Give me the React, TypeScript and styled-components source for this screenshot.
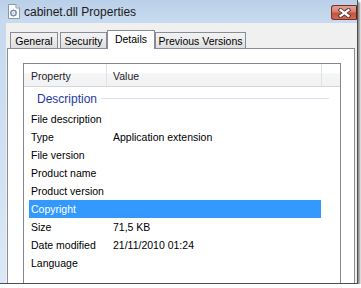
import React from 'react';
import styled, { createGlobalStyle } from 'styled-components';

const GlobalStyle = createGlobalStyle`
  html, body {
    margin: 0;
    padding: 0;
    background: #ffffff;
  }
  body {
    font-family: 'Liberation Sans', Arial, sans-serif;
  }
`;

const Window = styled.div`
  width: 357px;
  height: 283px;
  display: flex;
  flex-direction: column;
  background: linear-gradient(to bottom, #c4d8ee, #dbe8f6);
  border-right: 1px solid #4e4e4e;
  border-bottom: 1px solid #4e4e4e;
  box-shadow: 2px 2px 2px rgba(0, 0, 0, 0.45);
  overflow: hidden;
`;

const TitleBar = styled.div`
  height: 23px;
  flex-shrink: 0;
  display: flex;
  align-items: center;
  padding-left: 7px;
  background: linear-gradient(to bottom, #bad0e9, #c9dbef);
`;

const TitleText = styled.span`
  margin-left: 3px;
  font-size: 12px;
  color: #1b1b1b;
`;

const CloseButton = styled.div`
  margin-left: auto;
  align-self: flex-start;
  margin-top: 5px;
  width: 26px;
  height: 15px;
  box-sizing: border-box;
  border: 1px solid #7b2f25;
  border-right-color: #5a241d;
  border-radius: 3px 0 0 3px;
  background: linear-gradient(to bottom, #e3a394 0%, #d6816f 45%, #c4533f 55%, #cf6a55 100%);
  display: flex;
  align-items: center;
  justify-content: center;
`;

const Body = styled.div`
  flex: 1;
  display: flex;
  flex-direction: column;
  margin-left: 6px;
  padding-top: 7px;
  background: #f0f0f0;
  min-height: 0;
`;

const TabStrip = styled.div`
  height: 18px;
  flex-shrink: 0;
  display: flex;
  align-items: flex-end;
  padding-left: 4px;
  position: relative;
  z-index: 1;
`;

const Tab = styled.div<{ $width: number; $gap: number; $active?: boolean }>`
  width: ${(p) => p.$width}px;
  margin-left: ${(p) => p.$gap}px;
  height: ${(p) => (p.$active ? 19 : 16)}px;
  margin-bottom: ${(p) => (p.$active ? -1 : 0)}px;
  box-sizing: border-box;
  border: 1px solid #898c95;
  border-bottom: none;
  background: ${(p) =>
    p.$active ? '#ffffff' : 'linear-gradient(to bottom, #f2f2f2 0%, #ebebeb 50%, #dddddd 100%)'};
  font-size: 10.5px;
  color: #000;
  text-align: center;
  line-height: ${(p) => (p.$active ? 16 : 17)}px;
  white-space: nowrap;
`;

const Panel = styled.div`
  flex: 1;
  display: flex;
  flex-direction: column;
  margin-left: 1px;
  margin-right: 2px;
  padding: 14px 13px 0 15px;
  border: 1px solid #898c95;
  border-bottom: none;
  background: #ffffff;
  min-height: 0;
`;

const ListBox = styled.div`
  flex: 1;
  display: flex;
  flex-direction: column;
  border: 1px solid #828790;
  border-bottom: none;
  background: #ffffff;
`;

const Header = styled.div`
  height: 22px;
  flex-shrink: 0;
  display: flex;
  border-bottom: 1px solid #d5d5d5;
  background: linear-gradient(to bottom, #ffffff 0%, #ffffff 40%, #f4f5f6 45%, #f1f2f3 100%);
`;

const HeaderCell = styled.div<{ $width: number; $pad: number }>`
  width: ${(p) => p.$width}px;
  box-sizing: border-box;
  padding-left: ${(p) => p.$pad}px;
  padding-top: 2px;
  border-right: 1px solid #e2e3e5;
  font-size: 10.5px;
  color: #1e1e1e;
  display: flex;
  align-items: center;
`;

const GroupRow = styled.div`
  height: 23px;
  flex-shrink: 0;
  display: flex;
  align-items: center;
  padding-left: 13px;
  padding-right: 11px;
`;

const GroupTitle = styled.span`
  font-size: 12px;
  color: #1e3aa4;
`;

const GroupLine = styled.div`
  flex: 1;
  height: 1px;
  margin-left: 4px;
  margin-top: -1px;
  background: #d8e1ee;
`;

const Row = styled.div<{ $selected?: boolean }>`
  height: 18px;
  flex-shrink: 0;
  margin: 0 19px 0 5px;
  padding-left: 2px;
  display: grid;
  grid-template-columns: 82px 1fr;
  align-items: center;
  font-size: 10.5px;
  color: ${(p) => (p.$selected ? '#ffffff' : '#000000')};
  background: ${(p) => (p.$selected ? '#3399ff' : 'transparent')};
  white-space: nowrap;
`;

const FileIcon = () => (
  <svg width="14" height="15" viewBox="0 0 14 15">
    <path d="M1.5 0.5h7.5l3.5 3.5v10.5h-11z" fill="#fbfcfd" stroke="#8d9aaa" />
    <path d="M9 0.5v3.5h3.5" fill="#e4eaf2" stroke="#8d9aaa" />
    <circle cx="6.5" cy="9" r="2.6" fill="none" stroke="#7d8fa6" strokeWidth="1.4" />
    <path d="M6.5 5.4v1.2M6.5 11.4v1.2M2.9 9h1.2M8.9 9h1.2M4 6.5l.8.8M8.2 10.7l.8.8M9 6.5l-.8.8M4.8 10.7l-.8.8" stroke="#7d8fa6" strokeWidth="1.2" />
    <circle cx="6.5" cy="9" r="0.9" fill="#b7c4d4" />
  </svg>
);

const CloseGlyph = () => (
  <svg width="13" height="10" viewBox="0 0 13 10">
    <path d="M2.5 2l8 6M10.5 2l-8 6" stroke="#4b2a26" strokeWidth="3.8" strokeLinecap="square" />
    <path d="M2.5 2l8 6M10.5 2l-8 6" stroke="#ffffff" strokeWidth="2.2" strokeLinecap="square" />
  </svg>
);

const tabs = [
  { label: 'General', width: 48, gap: 0 },
  { label: 'Security', width: 47, gap: 2 },
  { label: 'Details', width: 48, gap: 0, active: true },
  { label: 'Previous Versions', width: 91, gap: 0 },
];

const rows: { name: string; value?: string; selected?: boolean }[] = [
  { name: 'File description' },
  { name: 'Type', value: 'Application extension' },
  { name: 'File version' },
  { name: 'Product name' },
  { name: 'Product version' },
  { name: 'Copyright', selected: true },
  { name: 'Size', value: '71,5 KB' },
  { name: 'Date modified', value: '21/11/2010 01:24' },
  { name: 'Language' },
];

export default function App() {
  return (
    <>
      <GlobalStyle />
      <Window>
        <TitleBar>
          <FileIcon />
          <TitleText>cabinet.dll Properties</TitleText>
          <CloseButton>
            <CloseGlyph />
          </CloseButton>
        </TitleBar>
        <Body>
          <TabStrip>
            {tabs.map((t) => (
              <Tab key={t.label} $width={t.width} $gap={t.gap} $active={t.active}>
                {t.label}
              </Tab>
            ))}
          </TabStrip>
          <Panel>
            <ListBox>
              <Header>
                <HeaderCell $width={83} $pad={7}>Property</HeaderCell>
                <HeaderCell $width={215} $pad={6}>Value</HeaderCell>
              </Header>
              <GroupRow>
                <GroupTitle>Description</GroupTitle>
                <GroupLine />
              </GroupRow>
              {rows.map((r) => (
                <Row key={r.name} $selected={r.selected}>
                  <span>{r.name}</span>
                  <span>{r.value ?? ''}</span>
                </Row>
              ))}
            </ListBox>
          </Panel>
        </Body>
      </Window>
    </>
  );
}
